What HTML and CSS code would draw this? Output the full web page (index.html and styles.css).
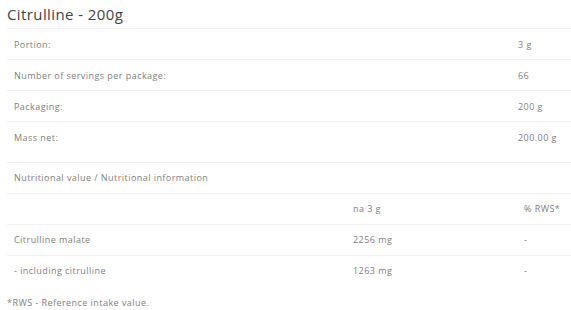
FILE: index.html
```html
<!DOCTYPE html>
<html lang="en">
<head>
    <meta charset="UTF-8">
    <title>Citrulline - 200g</title>
    <link rel="stylesheet" href="styles.css">
</head>
<body>
    <div class="specs">
        <h2>Citrulline - 200g</h2>
        <table class="spec-table">
            <tr><td>Portion:</td><td>3 g</td></tr>
            <tr><td>Number of servings per package:</td><td>66</td></tr>
            <tr><td>Packaging:</td><td>200 g</td></tr>
            <tr><td>Mass net:</td><td>200.00 g</td></tr>
        </table>
        <table class="nutrition-table">
            <tr><td colspan="3">Nutritional value / Nutritional information</td></tr>
            <tr><td></td><td>na 3 g</td><td>% RWS*</td></tr>
            <tr><td>Citrulline malate</td><td>2256 mg</td><td>-</td></tr>
            <tr><td>- including citrulline</td><td>1263 mg</td><td>-</td></tr>
        </table>
        <p class="note">*RWS - Reference intake value.</p>
    </div>
</body>
</html>
```

FILE: styles.css
```css
* {
    box-sizing: border-box;
}
body {
    margin: 0;
    background: #fff;
    font-family: 'Open Sans', sans-serif;
    color: #808080;
}
.specs {
    padding: 0 0 0 7px;
}
h2 {
    margin: 0;
    height: 28px;
    padding-top: 4px;
    font-size: 15px;
    font-weight: 400;
    letter-spacing: 0.4px;
    color: #444;
    line-height: 20px;
}
table {
    width: 564px;
    border-collapse: collapse;
    font-size: 9px;
    letter-spacing: 0.45px;
}
td {
    height: 31px;
    padding: 0 7px;
    border-top: 1px solid #efefef;
    vertical-align: middle;
}
.spec-table td:first-child {
    width: 504px;
}
.nutrition-table {
    margin-top: 9px;
}
.nutrition-table td:first-child {
    width: 339px;
}
.nutrition-table td:nth-child(2) {
    width: 171px;
}
.note {
    margin: 11px 0 0;
    font-size: 9px;
    letter-spacing: 0.45px;
    line-height: 12px;
}
```
